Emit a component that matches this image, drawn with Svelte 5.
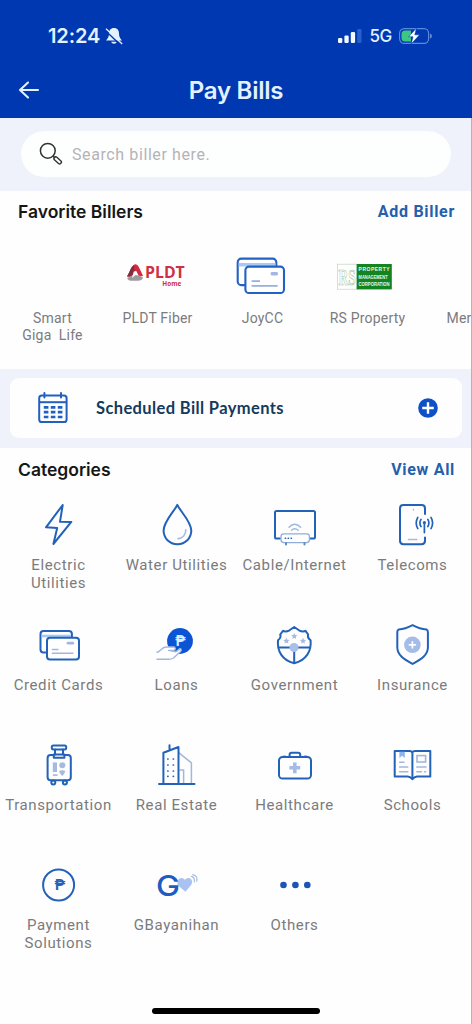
<script>
  let search = $state('');

  const favorites = [
    { icon: '', label: 'Smart\nGiga\u00a0 Life' },
    { icon: 'pldt', label: 'PLDT Fiber' },
    { icon: 'joycc', label: 'JoyCC' },
    { icon: 'rs', label: 'RS Property' },
    { icon: '', label: 'Meralco' }
  ];

  const categories = [
    { icon: 'electric', label: 'Electric Utilities' },
    { icon: 'water', label: 'Water Utilities' },
    { icon: 'cable', label: 'Cable/Internet' },
    { icon: 'telecoms', label: 'Telecoms' },
    { icon: 'cards', label: 'Credit Cards' },
    { icon: 'loans', label: 'Loans' },
    { icon: 'government', label: 'Government' },
    { icon: 'insurance', label: 'Insurance' },
    { icon: 'transport', label: 'Transportation' },
    { icon: 'estate', label: 'Real Estate' },
    { icon: 'health', label: 'Healthcare' },
    { icon: 'schools', label: 'Schools' },
    { icon: 'payment', label: 'Payment Solutions' },
    { icon: 'gbayanihan', label: 'GBayanihan' },
    { icon: 'others', label: 'Others' }
  ];

  const windows = [19, 25, 31, 36.3];
  const star = 'M0 -3.2L.9 -1.1L3.1 -.9L1.5 .6L1.9 2.8L0 1.7L-1.9 2.8L-1.5 .6L-3.1 -.9L-.9 -1.1Z';
</script>

<div class="screen">
  <header>
    <div class="status">
      <div class="clock">
        <span>12:24</span>
        <svg width="18" height="18" viewBox="0 0 18 18">
          <path d="M9 1C5.6 1 4 3.5 4 6.4C4 10 2.8 11.2 1 13.6H17C15.2 11.2 14 10 14 6.4C14 3.5 12.4 1 9 1Z" fill="#e4f2ff" />
          <path d="M6.2 14.8H11.8C11.2 17.4 6.8 17.4 6.2 14.8Z" fill="#e4f2ff" />
          <path d="M0 3.2L15.6 18" stroke="#0038b1" stroke-width="1.4" />
          <path d="M1 1.8L17.2 17" stroke="#e4f2ff" stroke-width="1.3" />
        </svg>
      </div>
      <div class="signal">
        <svg width="24" height="16" viewBox="0 0 24 16">
          <rect x="0" y="10" width="4.3" height="5" rx="1.2" fill="#f2f9ff" />
          <rect x="6.4" y="7.5" width="4.3" height="7.5" rx="1.2" fill="#f2f9ff" />
          <rect x="12.8" y="4" width="4.3" height="11" rx="1.2" fill="#f2f9ff" />
          <rect x="19.2" y="1" width="4.3" height="14" rx="1.2" fill="#2860cb" />
        </svg>
        <span>5G</span>
        <svg width="34" height="18" viewBox="0 0 34 18">
          <rect x=".6" y="1.6" width="29" height="14.8" rx="4.6" fill="none" stroke="#5b89dc" stroke-width="1.2" />
          <path d="M6 3.5H12V14.5H6Q2.5 14.5 2.5 11V7Q2.5 3.5 6 3.5Z" fill="#3cc882" />
          <path d="M31 6.5Q33 7 33 9Q33 11 31 11.5Z" fill="#5b89dc" />
          <path d="M17.5 1L9.6 9.8H14L12.2 17L20.6 7.8H15.8Z" fill="#fff" stroke="#0038b1" stroke-width=".6" />
        </svg>
      </div>
    </div>
    <div class="titlebar">
      <button class="back" aria-label="Back">
        <svg width="22" height="20" viewBox="0 0 22 20">
          <path d="M10 2.5L2 10L10 17.5M2 10H20" fill="none" stroke="#e4f2ff" stroke-width="2.1" stroke-linecap="round" stroke-linejoin="round" />
        </svg>
      </button>
      <h1>Pay Bills</h1>
    </div>
  </header>

  <div class="search">
    <label>
      <svg width="24" height="24" viewBox="0 0 24 24" fill="none" stroke="#333">
        <circle cx="8.8" cy="8.8" r="7.4" stroke-width="1.5" />
        <path d="M13.8 13.8L16.2 16" stroke-width="1.6" />
        <rect x="-1.8" y="-4.2" width="3.6" height="8.6" rx="1.5" transform="translate(18.6 18.3) rotate(-47)" stroke-width="1.4" />
      </svg>
      <input type="text" placeholder="Search biller here." bind:value={search} />
    </label>
  </div>

  <section class="favorites">
    <div class="heading">
      <h2>Favorite Billers</h2>
      <a href="#add">Add Biller</a>
    </div>
    <div class="strip">
      {#each favorites as item}
        <div class="biller">
          <svg width="64" height="50" viewBox="0 0 64 50">
            {#if item.icon === 'pldt'}
              <path d="M1 25.5C4 21 5 15.5 8.5 13.5C11.5 12.5 13 16 17 25L12.5 25.5L9.5 20.5L6.5 26Z" fill="#d8283c" />
              <path d="M1 25.5C4 21 4.5 16 8 14L8.5 20L5.5 25.5Z" fill="#7e3040" />
              <path d="M1.2 27C6 25 9 21.5 11 22.5C13 25 15 25.5 17 26.5Q16 29.7 12 29.7H5Q2 29.7 1.2 27Z" fill="#9d9a9c" />
              <path d="M7.8 20.5L10.3 20L12.5 24.5L9.5 24L6 27Z" fill="#fff" />
              <text x="19" y="27.2" class="pldt" font-size="15.3" textLength="39.8" lengthAdjust="spacingAndGlyphs">PLDT</text>
              <text x="36.3" y="35" class="pldt" font-size="6.4" textLength="19" lengthAdjust="spacingAndGlyphs">Home</text>
            {:else if item.icon === 'joycc'}
              <g stroke="#2262c4" stroke-width="2.1">
                <rect x="6.7" y="7.6" width="38.6" height="26.5" rx="3.6" fill="#fff" />
                <path d="M7.7 13.8H44.5" stroke="#a9c8f5" stroke-width="3.4" />
                <rect x="14.4" y="15.6" width="38.6" height="26.4" rx="3.6" fill="#fff" />
              </g>
              <rect x="39.6" y="21" width="7.4" height="3.5" rx="1.4" fill="#a2b8e2" />
              <path d="M20.6 30.2H29M20.6 34.8H46.6" stroke="#98b0dc" stroke-width="1.8" />
            {:else if item.icon === 'rs'}
              <rect x="1.4" y="13.2" width="20" height="25" fill="#fff" stroke="#bdd6bd" stroke-width=".7" />
              <rect x="20.6" y="13" width="35.2" height="25.4" fill="#148321" />
              <text x="2.6" y="34" class="rs" font-size="23" textLength="17" lengthAdjust="spacingAndGlyphs">RS</text>
              <g class="rs-lines">
                <text x="22.6" y="20.4" textLength="31">PROPERTY</text>
                <text x="22.6" y="27.7" textLength="29" lengthAdjust="spacingAndGlyphs">MANAGEMENT</text>
                <text x="22.6" y="35" textLength="31" lengthAdjust="spacingAndGlyphs">CORPORATION</text>
              </g>
            {/if}
          </svg>
          <span>{item.label}</span>
        </div>
      {/each}
    </div>
  </section>

  <div class="scheduled">
    <div class="card">
      <svg width="32" height="34" viewBox="0 0 32 34" fill="none" stroke="#2360bd" stroke-width="2">
        <rect x="2.2" y="4.6" width="27.4" height="26.4" rx="2.6" />
        <path d="M2.2 11.2H29.6" />
        <path d="M7.4 2V6.4M24 2V6.4" stroke-linecap="round" />
        <path d="M6.8 16.4H25.4M6.8 21.2H25.4M6.8 26H25.4" stroke-width="2.7" stroke-dasharray="4.6 2.4" />
      </svg>
      <strong>Scheduled Bill Payments</strong>
      <svg width="20" height="20" viewBox="0 0 20 20">
        <circle cx="10" cy="10" r="9.8" fill="#0e50c8" />
        <path d="M10 4.2V15.8M4.2 10H15.8" stroke="#fff" stroke-width="2.4" />
      </svg>
    </div>
  </div>

  <section class="categories">
    <div class="heading">
      <h2>Categories</h2>
      <a href="#all">View All</a>
    </div>
    <div class="grid">
      {#each categories as item}
        <div class="category">
          <svg width="50" height="50" viewBox="0 0 50 50" fill="none" stroke="#2262b8" stroke-width="2" stroke-linejoin="round" stroke-linecap="round">
            {#if item.icon === 'electric'}
              <path d="M29.7 5L13 27.3L24.2 28L20.4 44L38.3 21.9L27 21.7Z" />
            {:else if item.icon === 'water'}
              <path d="M26.3 4.9C23.5 11 12.6 21.5 12.6 30.6C12.6 38.3 18.5 44.2 26.4 44.2C34.3 44.2 40.3 38.3 40.3 30.6C40.3 21.5 29 11 26.3 4.9Z" />
              <path d="M27 38.6C31.5 38.6 35 34.8 34.8 29.8" stroke="#a5bbdf" stroke-width="1.6" />
            {:else if item.icon === 'cable'}
              <path d="M11 38.6H7.6Q6 38.6 6 37V12.6Q6 11 7.6 11H44.4Q46 11 46 12.6V37Q46 38.6 44.4 38.6H41" />
              <rect x="12" y="33.8" width="28.4" height="8.8" rx="2.8" stroke="#8fadd9" stroke-width="1.3" />
              <path d="M16.3 38.2H16.6M19.2 38.2H19.5M22.1 38.2H22.4" stroke-width="1.6" />
              <path d="M17 43V44.4M35.5 43V44.4" stroke="#5f88c4" />
              <path d="M20 27.2Q25.7 21.3 31.6 27.2M22.5 30.3Q25.7 27 29.2 30.3" stroke="#9bb7df" stroke-width="1.4" />
            {:else if item.icon === 'telecoms'}
              <path d="M38 14V8.4Q38 5 34.6 5H16.4Q13 5 13 8.4V40.8Q13 44.2 16.4 44.2H34.6Q38 44.2 38 40.8V37.5" />
              <path d="M21.5 39.4H29.8M26.4 9.4V9.9" stroke="#a5bbdf" stroke-width="1.5" />
              <path d="M37.4 23.5V32.6M34 19.4Q31.8 23 34 26.6M40.8 19.4Q43 23 40.8 26.6M30.8 17.4Q27.6 23 30.8 28.6M44 17.4Q47.2 23 44 28.6" stroke-width="1.7" />
              <circle cx="37.4" cy="22.6" r="1.6" fill="#2262b8" stroke="none" />
            {:else if item.icon === 'cards'}
              <rect x="7.5" y="11" width="31.4" height="21.4" rx="3" fill="#fff" />
              <path d="M8.6 16H37.9" stroke="#a9c8f5" stroke-width="2.6" stroke-linecap="butt" />
              <rect x="14" y="17.7" width="32" height="21.8" rx="3" fill="#fff" />
              <path d="M35 23.2H39.8" stroke="#a2b8e2" stroke-width="2.8" />
              <path d="M19.3 29.5H25M19.3 33.2H40" stroke="#a2b8e2" stroke-width="1.4" />
            {:else if item.icon === 'loans'}
              <circle cx="29" cy="21" r="12.9" fill="#0b55d4" stroke="none" />
              <text x="29.4" y="25.6" class="peso" font-size="14" fill="#dcebff">₱</text>
              <path d="M6 32.2C9 32.5 10 27 15.5 27H23.4Q25.6 29.4 22.6 30.4H17.5L25 31.8L29 28.6Q31.5 29.5 29 32L22.5 38Q20.5 39.3 17.5 39.3H6" fill="#fff" stroke="#a2b8db" stroke-width="1.4" />
            {:else if item.icon === 'government'}
              <path d="M25.2 7L20.5 10.3Q16.5 12.3 14 10.8L11.2 14.5Q12.5 17.6 9 20.3C8 31 13 40.2 25.2 43.3C37.4 40.2 42.6 31 41.6 20.3Q38 17.6 39.2 14.5L36.5 10.8Q34 12.3 30 10.3Z" />
              <path d="M9.6 27.5H41M25.2 27.5V43" />
              <circle cx="25" cy="27.5" r="4.5" fill="#a7bfe9" stroke="none" />
              <g fill="#a7b9de" stroke="none">
                <path d={star} transform="translate(17.4 20.8)" />
                <path d={star} transform="translate(25.3 16.1)" />
                <path d={star} transform="translate(34 20.8)" />
              </g>
            {:else if item.icon === 'insurance'}
              <path d="M25.6 5.2Q18 9.2 11.8 9.5Q10.3 10 10.3 12V28C11 36.5 18.5 39.8 25.6 44C32.7 39.8 40.2 36.5 40.9 28V12Q40.9 10 39.4 9.5Q33 9.2 25.6 5.2Z" />
              <circle cx="25.4" cy="24.8" r="8.3" fill="#a3bce8" stroke="none" />
              <path d="M25.4 21.8V27.8M22.4 24.8H28.4" stroke="#fff" stroke-width="1.7" />
            {:else if item.icon === 'transport'}
              <rect x="18.8" y="5.4" width="14.4" height="4" rx="1.6" />
              <path d="M22 9.6V14.5M30 9.6V14.5" />
              <path d="M20.8 15H17.6Q14.6 15 14.6 18V37.2Q14.6 40.2 17.6 40.2H34.8Q37.8 40.2 37.8 37.2V18Q37.8 15 34.8 15H31.4M20.8 14.6V17.8H31.4V14.6Z" />
              <circle cx="20.3" cy="42.6" r="2" />
              <circle cx="31.9" cy="42.6" r="2" />
              <g fill="#a7b9de" stroke="none">
                <rect x="19.8" y="22.4" width="4.2" height="9.6" />
                <circle cx="29.3" cy="25.2" r="3" />
                <path d="M26 31Q29.3 29.3 32.4 31Q31.5 34 29.2 36Q27 34 26 31Z" />
                <rect x="19.8" y="34.3" width="4.8" height="1.6" />
              </g>
            {:else if item.icon === 'estate'}
              <path d="M28 12.8L40.4 22.8V43.5M29 30H32.6V43.5" stroke="#a2b8db" stroke-width="1.5" />
              <path d="M8 44H43.5M12.4 43.5V12.8L27.5 7V43.5M18.5 10V5.2" />
              {#each windows as y}
                <path d="M16.8 {y}H17M22.3 {y}H22.5" stroke-width="1.7" />
              {/each}
            {:else if item.icon === 'health'}
              <path d="M14.5 16.2H16.2M35.7 16.2H37.4" stroke="#8fb0e4" />
              <rect x="10" y="17" width="32" height="21.5" rx="3.6" />
              <path d="M20.6 16.5V14.8Q20.6 12.8 22.6 12.8H29.2Q31.2 12.8 31.2 14.8V16.5" />
              <path d="M25.8 22.4V33.2M20.4 27.8H31.2" stroke="#a3bbe6" stroke-width="3.6" stroke-linecap="butt" />
            {:else if item.icon === 'schools'}
              <path d="M25.3 12.6Q24.6 11 22.6 11H7.7V36.4H20.8Q23.6 36.6 25.4 39.2Q27.2 36.6 30 36.4H43.3V11H28Q26 11 25.3 12.6ZM25.4 12.6V39" />
              <path d="M12.4 11.8H17.8V18L15.1 15.8L12.4 18Z" fill="#8fb4ee" stroke="none" />
              <path d="M12.6 22.3H17M12.6 27H20.8M12.6 31.8H20.8M29.8 27H39M29.8 31.8H34.4M37.6 31.8H38.6" stroke="#a2b8db" stroke-width="1.5" />
              <rect x="30" y="15.6" width="8.6" height="6.4" stroke="#a2b8db" stroke-width="1.6" stroke-linejoin="miter" />
            {:else if item.icon === 'payment'}
              <circle cx="25.6" cy="25" r="15.5" />
              <text x="26.8" y="30" class="peso" font-size="14.5" fill="#2262b8">₱</text>
            {:else if item.icon === 'gbayanihan'}
              <path d="M34.4 31.8L26.5 25V20.4Q30.5 16 34 19.8Q36.3 17 39.6 18.8Q42.4 21 40.2 25Z" fill="#a9c2f0" stroke="none" />
              <path d="M40.5 16.4Q44 17.4 43.3 22M41.7 14.6Q47 15.6 45.7 21.3" stroke="#a3b9de" stroke-width="1.1" />
              <text x="5" y="35.8" class="big-g" font-size="29" textLength="24" lengthAdjust="spacingAndGlyphs">G</text>
            {:else if item.icon === 'others'}
              <g fill="#1d55b4" stroke="none">
                <circle cx="14.5" cy="25" r="3.3" />
                <circle cx="26.4" cy="25" r="3.3" />
                <circle cx="38.3" cy="25" r="3.3" />
              </g>
            {/if}
          </svg>
          <span>{item.label}</span>
        </div>
      {/each}
    </div>
  </section>

  <div class="home-bar"></div>
</div>

<style>
  :global(body) {
    background: #fdfdfd;
  }
  .screen {
    position: relative;
    display: flex;
    flex-direction: column;
    width: 472px;
    height: 1024px;
    overflow: hidden;
    background: #fefefe;
    font-family: Roboto, "Noto Sans", sans-serif;
    color: #7b7b7d;
  }
  /* thin divider down the right edge */
  .screen::after {
    content: "";
    position: absolute;
    top: 118px;
    right: 0;
    bottom: 0;
    width: 1px;
    background: #b3b3b8;
  }
  h1, h2 {
    margin: 0;
  }
  header {
    height: 117.5px;
    flex: none;
    background: #0038b1;
    color: #e4f2ff;
  }
  .status {
    display: flex;
    justify-content: space-between;
    align-items: center;
    height: 70px;
    padding: 1px 39px 0 48px;
    box-sizing: border-box;
    font-family: Inter, sans-serif;
  }
  .clock, .signal {
    display: flex;
    align-items: center;
  }
  .clock {
    gap: 5px;
    font-size: 20px;
    font-weight: 600;
    letter-spacing: -0.1px;
  }
  .signal {
    font-size: 17px;
    font-weight: 500;
  }
  .signal span {
    margin: 0 7px 0 7px;
    letter-spacing: -0.3px;
  }
  .titlebar {
    display: grid;
    grid-template-columns: 60px 1fr 60px;
    align-items: center;
    height: 40px;
  }
  .back {
    display: flex;
    padding: 0 0 0 18px;
    border: 0;
    background: none;
  }
  h1 {
    text-align: center;
    font-family: Inter, sans-serif;
    font-size: 24px;
    font-weight: 600;
    letter-spacing: -0.25px;
  }
  .search {
    height: 73px;
    flex: none;
    padding: 13.5px 21px 0;
    box-sizing: border-box;
    background: #eff1fb;
  }
  .search label {
    display: flex;
    align-items: center;
    gap: 9px;
    height: 46px;
    padding-left: 18px;
    border-radius: 23px;
    background: #fdfefe;
  }
  .search input {
    width: 300px;
    padding: 0;
    border: 0;
    outline: 0;
    background: none;
    font: 16px Roboto, sans-serif;
    letter-spacing: 0.6px;
  }
  .search input::placeholder {
    color: #b4b4b6;
  }
  .heading {
    display: flex;
    justify-content: space-between;
    align-items: center;
    height: 42px;
    padding: 0 17px 0 18px;
  }
  h2 {
    font-family: Inter, sans-serif;
    font-size: 17.5px;
    font-weight: 600;
    color: #161616;
  }
  .heading a {
    color: #2460ac;
    font-size: 16px;
    font-weight: 700;
    letter-spacing: 0.7px;
    text-decoration: none;
  }
  .favorites {
    height: 178px;
    flex: none;
    overflow: hidden;
  }
  .strip {
    display: flex;
    padding-top: 18px;
  }
  .biller {
    display: flex;
    flex-direction: column;
    flex: none;
    align-items: center;
    width: 105px;
    gap: 9px;
  }
  .biller span {
    font-size: 14px;
    line-height: 17px;
    letter-spacing: 0.2px;
    text-align: center;
    white-space: pre;
  }
  .pldt {
    fill: #cf3045;
    font-family: "Open Sans", sans-serif;
    font-weight: 700;
  }
  .rs {
    fill: #fff;
    stroke: #9cc49f;
    stroke-width: 0.7px;
    font-family: "Liberation Serif", serif;
    font-weight: 700;
  }
  .rs-lines {
    fill: #e9f7e9;
    font: 700 5px "Liberation Sans", sans-serif;
  }
  .scheduled {
    height: 79.5px;
    flex: none;
    padding: 9.5px 10px 10px;
    box-sizing: border-box;
    background: #eff1fb;
  }
  .card {
    display: flex;
    align-items: center;
    height: 60px;
    padding: 0 24px 0 27px;
    border-radius: 9px;
    background: #fefefe;
  }
  .card strong {
    flex: 1;
    margin-left: 27px;
    color: #143a5c;
    font-family: Lato, sans-serif;
    font-size: 16.5px;
    font-weight: 700;
    letter-spacing: 0.38px;
  }
  .grid {
    display: grid;
    grid-template-columns: repeat(4, 118px);
    grid-auto-rows: 120px;
    padding-top: 10px;
  }
  .category {
    display: flex;
    flex-direction: column;
    align-items: center;
    gap: 6px;
    padding-right: 1px;
  }
  .category svg {
    margin-right: 1px;
  }
  .category span {
    max-width: 110px;
    font-size: 15px;
    line-height: 18px;
    letter-spacing: 0.6px;
    text-align: center;
  }
  .category svg, .biller svg {
    flex: none;
  }
  .peso, .big-g {
    stroke: none;
    font-family: Roboto, sans-serif;
    font-weight: 700;
  }
  .peso {
    text-anchor: middle;
  }
  .big-g {
    fill: #1d5cc0;
    font-family: Inter, sans-serif;
    font-weight: 500;
  }
  .home-bar {
    width: 168px;
    height: 6px;
    margin: auto auto 10px;
    border-radius: 3px;
    background: #000;
  }
</style>
